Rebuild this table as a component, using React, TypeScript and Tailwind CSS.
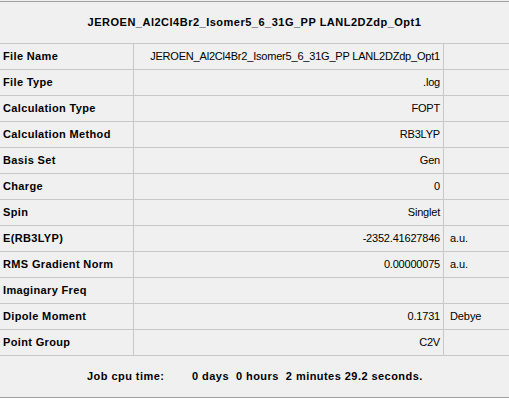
const rows: [string, string, string][] = [
  ["File Name", "JEROEN_Al2Cl4Br2_Isomer5_6_31G_PP LANL2DZdp_Opt1", ""],
  ["File Type", ".log", ""],
  ["Calculation Type", "FOPT", ""],
  ["Calculation Method", "RB3LYP", ""],
  ["Basis Set", "Gen", ""],
  ["Charge", "0", ""],
  ["Spin", "Singlet", ""],
  ["E(RB3LYP)", "-2352.41627846", "a.u."],
  ["RMS Gradient Norm", "0.00000075", "a.u."],
  ["Imaginary Freq", "", ""],
  ["Dipole Moment", "0.1731", "Debye"],
  ["Point Group", "C2V", ""],
]

export default function App() {
  return (
    <div className="w-[509px] h-[406px] bg-white text-black text-[11px] font-['Liberation_Sans',Arial,sans-serif] overflow-hidden">
      <div className="bg-[#f0f0f0] pt-px">
        <div className="h-[42px] border-t border-[#a0a0a0] flex items-center justify-center font-bold tracking-[0.5px]">
          JEROEN_Al2Cl4Br2_Isomer5_6_31G_PP LANL2DZdp_Opt1
        </div>
        {rows.map(([label, value, unit]) => (
          <div key={label} className="h-[26px] border-t border-[#c8c8c8] flex">
            <div className="w-[134px] border-r border-[#c8c8c8] flex items-center pl-[3px] font-bold tracking-[0.35px]">
              {label}
            </div>
            <div className="w-[310px] border-r border-[#c8c8c8] flex items-center justify-end pr-[3px] tracking-[-0.2px]">
              {value}
            </div>
            <div className="flex-1 flex items-center pl-[6px] tracking-[-0.1px]">{unit}</div>
          </div>
        ))}
        <div className="h-[43px] border-t border-b border-[#c8c8c8] border-b-[#a0a0a0] flex items-center font-bold tracking-[0.45px]">
          <span className="ml-[87px] w-[105px]">Job cpu time:</span>
          <span className="whitespace-pre">0 days  0 hours  2 minutes 29.2 seconds.</span>
        </div>
      </div>
    </div>
  )
}
